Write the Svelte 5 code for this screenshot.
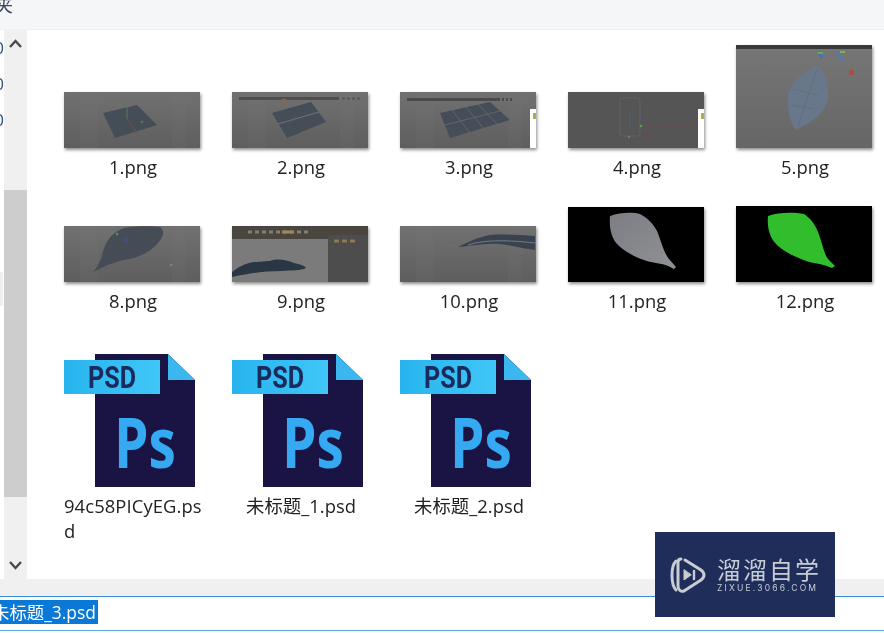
<script>
	// thumbnails in row order, h = thumbnail height
	const files = [
		{ name: '1.png', kind: 'plane', h: 56 },
		{ name: '2.png', kind: 'split', h: 56 },
		{ name: '3.png', kind: 'grid', h: 56 },
		{ name: '4.png', kind: 'cylinder', h: 56 },
		{ name: '5.png', kind: 'mesh', h: 103 },
		{ name: '8.png', kind: 'leaf', h: 56 },
		{ name: '9.png', kind: 'editor', h: 56 },
		{ name: '10.png', kind: 'side', h: 56 },
		{ name: '11.png', kind: 'render', h: 75 },
		{ name: '12.png', kind: 'green', h: 76 },
		{ name: '94c58PICyEG.psd', kind: 'psd', long: true },
		{ name: '未标题_1.psd', kind: 'psd' },
		{ name: '未标题_2.psd', kind: 'psd' }
	];
</script>

{#snippet backdrop(h)}
	<defs>
		<linearGradient id="bg{h}" x1="0" y1="0" x2="0" y2="1">
			<stop offset="0" stop-color="#717171" />
			<stop offset="1" stop-color="#5e5e5e" />
		</linearGradient>
	</defs>
	<rect width="136" height={h} fill="url(#bg{h})" />
	<rect x="16" width="18" height={h} fill="#777" opacity=".15" />
	<rect x="108" width="14" height={h} fill="#777" opacity=".15" />
{/snippet}

{#snippet sidePanel()}
	<rect x="130" y="17" width="6" height="39" fill="#fff" />
	<rect x="133" y="21" width="3" height="6" fill="#a8b04a" />
{/snippet}

{#snippet thumb(kind, h)}
	<svg class="thumb" width="136" height={h} viewBox="0 0 136 {h}">
		{#if kind === 'plane'}
			{@render backdrop(h)}
			<polygon points="39,21 73,13 93,33 51,46" fill="#454d57" />
			<path d="M63 27V10" stroke="#5c7a58" />
			<path d="M63 27L73 41" stroke="#7a4a40" />
			<circle cx="78" cy="30" r="1.200" fill="#4f7a68" />
		{:else if kind === 'split'}
			{@render backdrop(h)}
			<rect x="7" y="5" width="100" height="3" fill="#4e4e4e" />
			<path d="M110 6.500h18" stroke="#555" stroke-width="2" stroke-dasharray="3 2" />
			<circle cx="52" cy="9" r="2.500" fill="#7d6a48" />
			<polygon points="40,21 79,10 94,30 55,46" fill="#454d57" />
			<path d="M46 32L87 20" stroke="#6c7177" stroke-width="1.200" />
		{:else if kind === 'grid'}
			{@render backdrop(h)}
			<rect x="7" y="6" width="93" height="3" fill="#4a4a4a" />
			<path d="M102 7.500h11" stroke="#4a4a4a" stroke-width="3" stroke-dasharray="2 2" />
			<polygon points="40,21 90,10 110,28 50,46" fill="#454e58" />
			<path d="M45 33L100 19M52 18L70 41M66 15L84 37M78 12L97 32" stroke="#666c70" stroke-width=".8" />
			{@render sidePanel()}
		{:else if kind === 'cylinder'}
			<rect width="136" height="56" fill="#555" />
			<rect x="52" y="6" width="20" height="38" rx="3" fill="none" stroke="#5e6772" stroke-width=".7" />
			<path d="M73 34H128" stroke="#6a504c" />
			<path d="M62 20V36" stroke="#4c5d85" />
			<circle cx="73" cy="34" r="1.300" fill="#5f9a50" />
			<circle cx="61" cy="45" r="1" fill="#5f9a50" />
			<path d="M76 44h8" stroke="#7c4039" />
			{@render sidePanel()}
		{:else if kind === 'mesh'}
			<defs>
				<linearGradient id="meshbg" x1="0" y1="0" x2="0" y2="1">
					<stop offset="0" stop-color="#767676" />
					<stop offset="1" stop-color="#666" />
				</linearGradient>
			</defs>
			<rect width="136" height="103" fill="url(#meshbg)" />
			<rect width="136" height="4" fill="#3a3a3a" />
			<path d="M83 20C70 26 54 36 52 50C51 65 54 78 60 85C74 78 92 68 92 50C92 38 88 26 83 20Z" fill="#68778a" />
			<path d="M81 24L62 82M58 44L82 50M55 60L78 64" stroke="#5f6b7a" stroke-width=".7" fill="none" />
			<path d="M84 8l2 5" stroke="#3f6fc0" stroke-width="3" />
			<path d="M82 8h5" stroke="#5fb04f" stroke-width="2" />
			<path d="M100 8l8 8" stroke="#5578b0" stroke-width="2" />
			<path d="M104 7h5" stroke="#7fb050" stroke-width="2" />
			<rect x="113" y="25" width="5" height="5" fill="#b34a42" />
		{:else if kind === 'leaf'}
			{@render backdrop(h)}
			<path d="M29 46C33 42 36 36 38 30C40 18 46 7 60 2C70 0 88 0 96 1C100 4 100 9 97 13C90 24 76 32 60 34C50 36 40 40 29 46Z" fill="#454c56" />
			<circle cx="53" cy="8" r="1.500" fill="#4f8f5a" />
			<circle cx="62" cy="14" r="3" fill="#414f78" />
			<circle cx="107" cy="39" r="1.300" fill="#858585" />
		{:else if kind === 'editor'}
			<rect width="136" height="56" fill="#7b7b7b" />
			<rect width="136" height="13" fill="#4b4540" />
			<path d="M16 6h60" stroke="#7f8172" stroke-width="3" stroke-dasharray="4 3" />
			<path d="M50 6h12" stroke="#9a8a58" stroke-width="3" />
			<rect x="96" y="9" width="40" height="47" fill="#4d4d4d" />
			<path d="M102 15h24" stroke="#8f7a52" stroke-width="3" stroke-dasharray="5 3" />
			<path d="M0 46C8 40 14 37 22 36C30 36 32 35 38 35C46 32 54 34 62 37C68 38 73 40 74 42C68 45 60 44 50 45C34 45 18 47 0 51Z" fill="#2a3644" />
		{:else if kind === 'side'}
			{@render backdrop(h)}
			<path d="M58 21C66 17 78 11 90 9C105 8 120 9 135 10V24C120 22 110 19 100 18C90 17 78 19 58 21Z" fill="#39424e" />
			<path d="M68 19C80 15 100 13 135 17" stroke="#737e8c" fill="none" />
			<path d="M44 20h14" stroke="#6f6f6f" />
		{:else if kind === 'render'}
			<defs>
				<linearGradient id="grey" x1="0" y1="0" x2="1" y2="1">
					<stop offset="0" stop-color="#7c7e84" />
					<stop offset="1" stop-color="#8f9194" />
				</linearGradient>
			</defs>
			<rect width="136" height="75" fill="#000" />
			<path d="M42 9C52 5 66 5 72 7C80 11 86 18 89 24C93 34 96 46 101 52L108 60L106 62C101 59 96 57 88 56C74 54 58 46 50 38C43 31 41 20 42 9Z" fill="url(#grey)" />
		{:else if kind === 'green'}
			<rect width="136" height="76" fill="#000" />
			<path d="M32 10C42 6 58 6 68 8C74 12 79 18 82 26C86 36 88 48 92 53L99 60L96 62C91 60 86 58 78 57C64 54 48 46 40 38C33 31 31 20 32 10Z" fill="#31bd2c" />
		{/if}
	</svg>
{/snippet}

{#snippet psdIcon()}
	<svg class="psd" width="132" height="135" viewBox="0 0 132 135">
		<path d="M31 2H104L131 28V135H31Z" fill="#1a1445" />
		<path d="M104 2L131 28H104Z" fill="#3cb6ee" />
		<defs>
			<linearGradient id="tab" x1="0" y1="0" x2="1" y2="0">
				<stop offset="0" stop-color="#27b4ee" />
				<stop offset="1" stop-color="#40c6f8" />
			</linearGradient>
		</defs>
		<rect y="8" width="96" height="34" fill="url(#tab)" />
		<text class="psd-tag" x="24" y="36" textLength="48" lengthAdjust="spacingAndGlyphs">PSD</text>
		<text class="psd-ps" x="50" y="116" textLength="62" lengthAdjust="spacingAndGlyphs">Ps</text>
	</svg>
{/snippet}

<div class="window">
	<header class="titlebar"><span>夹</span></header>

	<div class="middle">
		<div class="tree"><span>0</span><span>0</span><span>0</span><div class="tree-mark"></div></div>
		<div class="scrollbar">
			<svg width="23" height="30" viewBox="0 0 23 30"><path d="M6 17L11.500 11L17 17" fill="none" stroke="#4a4a4a" stroke-width="2.400" /></svg>
			<div class="scroll-thumb"></div>
			<svg width="23" height="30" viewBox="0 0 23 30"><path d="M6 14L11.500 20L17 14" fill="none" stroke="#4a4a4a" stroke-width="2.400" /></svg>
		</div>
		<main class="files">
			{#each files as file}
				<div class="file" class:is-psd={file.kind === 'psd'}>
					<div class="preview">
						{#if file.kind === 'psd'}
							{@render psdIcon()}
						{:else}
							{@render thumb(file.kind, file.h)}
						{/if}
					</div>
					<div class="label" class:wrapped={file.long}>{file.name}</div>
				</div>
			{/each}
		</main>
	</div>

	<div class="status"></div>
	<div class="rename"><span class="selected">未标题_3.psd</span></div>

	<div class="watermark">
		<svg width="36" height="38" viewBox="0 0 36 38" fill="none" stroke="#c9ccd3" stroke-width="3" stroke-linecap="round" stroke-linejoin="round">
			<path d="M6 5C3 8 2 12 2 19C2 26 3 31 6 34" />
			<path d="M11 3C9 3 8 4 8 6V30C8 34 11 36 14 35L31 24C35 21 35 17 31 14L15 4" />
			<path d="M14 14V24L21 19Z" fill="#c9ccd3" stroke-width="1" />
			<path d="M24 15V23" stroke-width="2.400" />
		</svg>
		<div class="brand">
			<div class="brand-name">溜溜自学</div>
			<div class="brand-url">ZIXUE.3066.COM</div>
		</div>
	</div>
</div>

<style>
	:global(body) {
		background: #fff;
	}

	.window {
		position: relative;
		width: 884px;
		height: 633px;
		display: flex;
		flex-direction: column;
		overflow: hidden;
		background: #fff;
		font-family: 'Open Sans', 'Noto Sans CJK SC', sans-serif;
		color: #222;
		filter: blur(0.4px);
	}

	.titlebar {
		height: 29px;
		flex-shrink: 0;
		background: #f5f6f7;
		border-bottom: 1px solid #eef0f2;
		overflow: hidden;
	}

	.titlebar span {
		display: block;
		margin: -7px 0 0 -5px;
		font-size: 18px;
		line-height: 24px;
		color: #3c4a60;
	}

	.middle {
		flex: 1;
		display: flex;
		min-height: 0;
	}

	.tree {
		width: 4px;
		display: flex;
		flex-direction: column;
		align-items: flex-end;
		gap: 13px;
		padding-top: 6px;
		overflow: hidden;
		font-size: 17px;
		line-height: 23px;
		color: #2f4f80;
	}

	.tree-mark {
		flex-shrink: 0;
		align-self: flex-start;
		width: 3px;
		height: 34px;
		margin-top: 128px;
		background: #efefef;
	}

	.scrollbar {
		width: 23px;
		display: flex;
		flex-direction: column;
		background: #f0f0f0;
	}

	.scrollbar svg {
		flex-shrink: 0;
	}

	.scroll-thumb {
		height: 307px;
		margin-top: 130px;
		margin-bottom: 51px;
		background: #cdcdcd;
	}

	.files {
		flex: 1;
		display: grid;
		grid-template-columns: repeat(5, 136px);
		column-gap: 32px;
		align-content: start;
		padding: 15px 0 0 37px;
	}

	.file {
		width: 136px;
	}

	.file.is-psd {
		padding-top: 39px;
	}

	.preview {
		height: 103px;
		display: flex;
		align-items: flex-end;
	}

	.is-psd .preview {
		height: 135px;
	}

	.thumb {
		display: block;
		box-shadow: 1px 2px 3px rgba(0, 0, 0, 0.45);
	}

	.psd {
		display: block;
	}

	.psd-tag {
		font-family: 'Roboto', sans-serif;
		font-weight: 700;
		font-size: 31px;
		fill: #1a2a5c;
	}

	.psd-ps {
		font-family: 'Open Sans', sans-serif;
		font-weight: 700;
		font-size: 70px;
		fill: #35aaf2;
	}

	.label {
		margin: 6px -5px 0 -3px;
		text-align: center;
		font-size: 18.400px;
		line-height: 25px;
		overflow-wrap: anywhere;
	}

	.label.wrapped {
		margin: 6px -4px 0 0;
		text-align: left;
		letter-spacing: 0.1px;
	}

	.status {
		height: 17px;
		flex-shrink: 0;
		background: #f0f0f0;
	}

	.rename {
		height: 30px;
		flex-shrink: 0;
		border-top: 1.500px solid #3a8fdc;
		border-bottom: 1.500px solid #5aa7e8;
		margin-bottom: 2px;
		padding-top: 3px;
		overflow: hidden;
		display: flex;
	}

	.selected {
		height: 24px;
		margin-left: -8px;
		padding: 0 2px 0 0;
		background: #0a78d7;
		color: #fff;
		font-size: 17.400px;
		line-height: 24px;
		white-space: nowrap;
	}

	.watermark {
		position: absolute;
		left: 655px;
		top: 532px;
		width: 180px;
		height: 85px;
		box-sizing: border-box;
		padding: 24px 0 0 15px;
		display: flex;
		gap: 11px;
		background: #1f2d5a;
		color: #c9ccd3;
	}

	.brand-name {
		font-family: 'Noto Sans CJK SC', sans-serif;
		font-size: 24px;
		line-height: 26px;
		letter-spacing: 2px;
		white-space: nowrap;
	}

	.brand-url {
		font-family: 'Inter', sans-serif;
		font-size: 8.500px;
		line-height: 12px;
		letter-spacing: 2.200px;
		white-space: nowrap;
	}
</style>
